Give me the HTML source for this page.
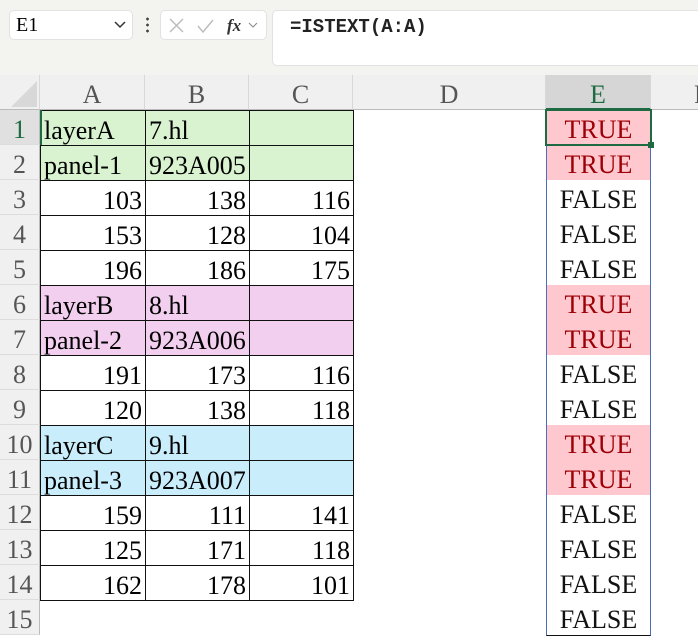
<html><head><style>
body{margin:0;width:698px;height:633px;overflow:hidden;background:#fff;font-family:"Liberation Serif",serif;position:relative}
.tb{position:absolute;left:0;top:0;width:698px;height:75px;background:#f3f3f0}
.nb{position:absolute;left:9px;top:10px;width:124px;height:30px;background:#fff;border:1px solid #e2e2e2;border-radius:5px;box-sizing:border-box;font-size:20px;padding:3px 0 0 6px;font-family:"Liberation Serif",serif}
.fb{position:absolute;left:160px;top:10px;width:107px;height:30px;background:#fff;border:1px solid #e2e2e2;border-radius:5px;box-sizing:border-box}
.fx{position:absolute;left:272px;top:10px;width:440px;height:56px;background:#fff;border:1px solid #e2e2e2;border-radius:5px;box-sizing:border-box;font-family:"Liberation Mono",monospace;font-size:19px;font-weight:bold;color:#222;padding:5px 0 0 17px}
.c{position:absolute;box-sizing:border-box;height:35px;font-size:26px;line-height:39px;white-space:nowrap;overflow:hidden;font-family:"Liberation Serif",serif}
.h{position:absolute;top:75px;height:35px;background:#f0f0f0;color:#555;font-size:26px;text-align:center;line-height:40px;box-sizing:border-box;border-right:1px solid #d8d8d8;border-bottom:1px solid #bbb}
.r{position:absolute;left:0;width:40px;height:35px;background:#f0f0f0;color:#555;font-size:26px;text-align:center;line-height:39px;box-sizing:border-box;border-bottom:1px solid #ddd;border-right:1px solid #bbb}
</style></head><body>
<div class="tb"></div>
<div class="nb">E1<svg style="position:absolute;right:6px;top:10px" width="12" height="8"><path d="M1 1l5 5 5-5" stroke="#333" stroke-width="1.5" fill="none"/></svg></div>
<div style="position:absolute;left:146px;top:16px;width:3px;height:18px;background:radial-gradient(circle,#444 1.3px,transparent 1.5px) 0 0/3px 6px"></div>
<div class="fb"><svg width="107" height="30"><path d="M9 8l13 13M22 8L9 21" stroke="#bbb" stroke-width="1.4"/><path d="M37 15l5 6 10-12" stroke="#bbb" stroke-width="1.4" fill="none"/><text x="66" y="20" font-family="Liberation Serif" font-style="italic" font-weight="bold" font-size="17" fill="#333">fx</text><path d="M88 12l4 4 4-4" stroke="#888" fill="none"/></svg></div>
<div class="fx">=ISTEXT(A:A)</div>
<div class="h" style="left:0;width:40px;background:#f0f0f0"><svg width="36" height="34" style="position:absolute;left:3px;top:0"><path d="M34 6V32H8z" fill="#d8d8d8"/></svg></div>
<div class="h" style="left:40px;width:105px">A</div>
<div class="h" style="left:145px;width:104px">B</div>
<div class="h" style="left:249px;width:104px">C</div>
<div class="h" style="left:353px;width:193px">D</div>
<div class="h" style="left:546px;width:105px;background:#d6d6d6;color:#1e6b43;border-bottom:2px solid #1e6b43">E</div>
<div class="h" style="left:651px;width:60px;text-align:left;padding-left:43px">F</div>
<div id="g"></div>
<script>
var d=[["layerA","7.hl","",1,"#d9f2d0"],["panel-1","923A005","",1,"#d9f2d0"],["103","138","116",0],["153","128","104",0],["196","186","175",0],["layerB","8.hl","",1,"#f2ceef"],["panel-2","923A006","",1,"#f2ceef"],["191","173","116",0],["120","138","118",0],["layerC","9.hl","",1,"#caedfb"],["panel-3","923A007","",1,"#caedfb"],["159","111","141",0],["125","171","118",0],["162","178","101",0],["","","",0]];
var h="",xs=[40,145,249,353];
d.forEach(function(r,i){var t=110+35*i;
h+='<div class="r" style="top:'+t+'px;'+(i==0?'background:#e0e0e0;color:#1e6b43':'')+'">'+(i+1)+'</div>';
if(i<14){for(var j=0;j<3;j++){var txt=j<2?r[j]:r[2];
h+='<div class="c" style="left:'+xs[j]+'px;top:'+t+'px;width:'+(xs[j+1]-xs[j]+1)+'px;height:36px;border:1.5px solid #111;background:'+(r[3]?r[4]:'#fff')+';text-align:'+(r[3]?'left;padding-left:3px':'right;padding-right:3px')+'">'+txt+'</div>';}}
var tr=r[3];
h+='<div class="c" style="left:546px;top:'+t+'px;width:105px;height:36px;border-left:1px solid #4a6fb8;border-right:1px solid #4a6fb8;border-bottom:1.5px solid #111;text-align:center;background:'+(tr?'#ffc7ce;color:#9c0006':'#fff;color:#111')+'">'+(tr?'TRUE':'FALSE')+'</div>';
});
document.getElementById('g').innerHTML=h;
</script>
<div style="position:absolute;left:545px;top:109px;width:107px;height:37px;border:2px solid #1e6b43;box-sizing:border-box"></div>
<div style="position:absolute;left:648px;top:142px;width:6px;height:6px;background:#1e6b43"></div>
<div style="position:absolute;left:40px;top:110px;width:2px;height:35px;background:#1e6b43"></div>
</body></html>
